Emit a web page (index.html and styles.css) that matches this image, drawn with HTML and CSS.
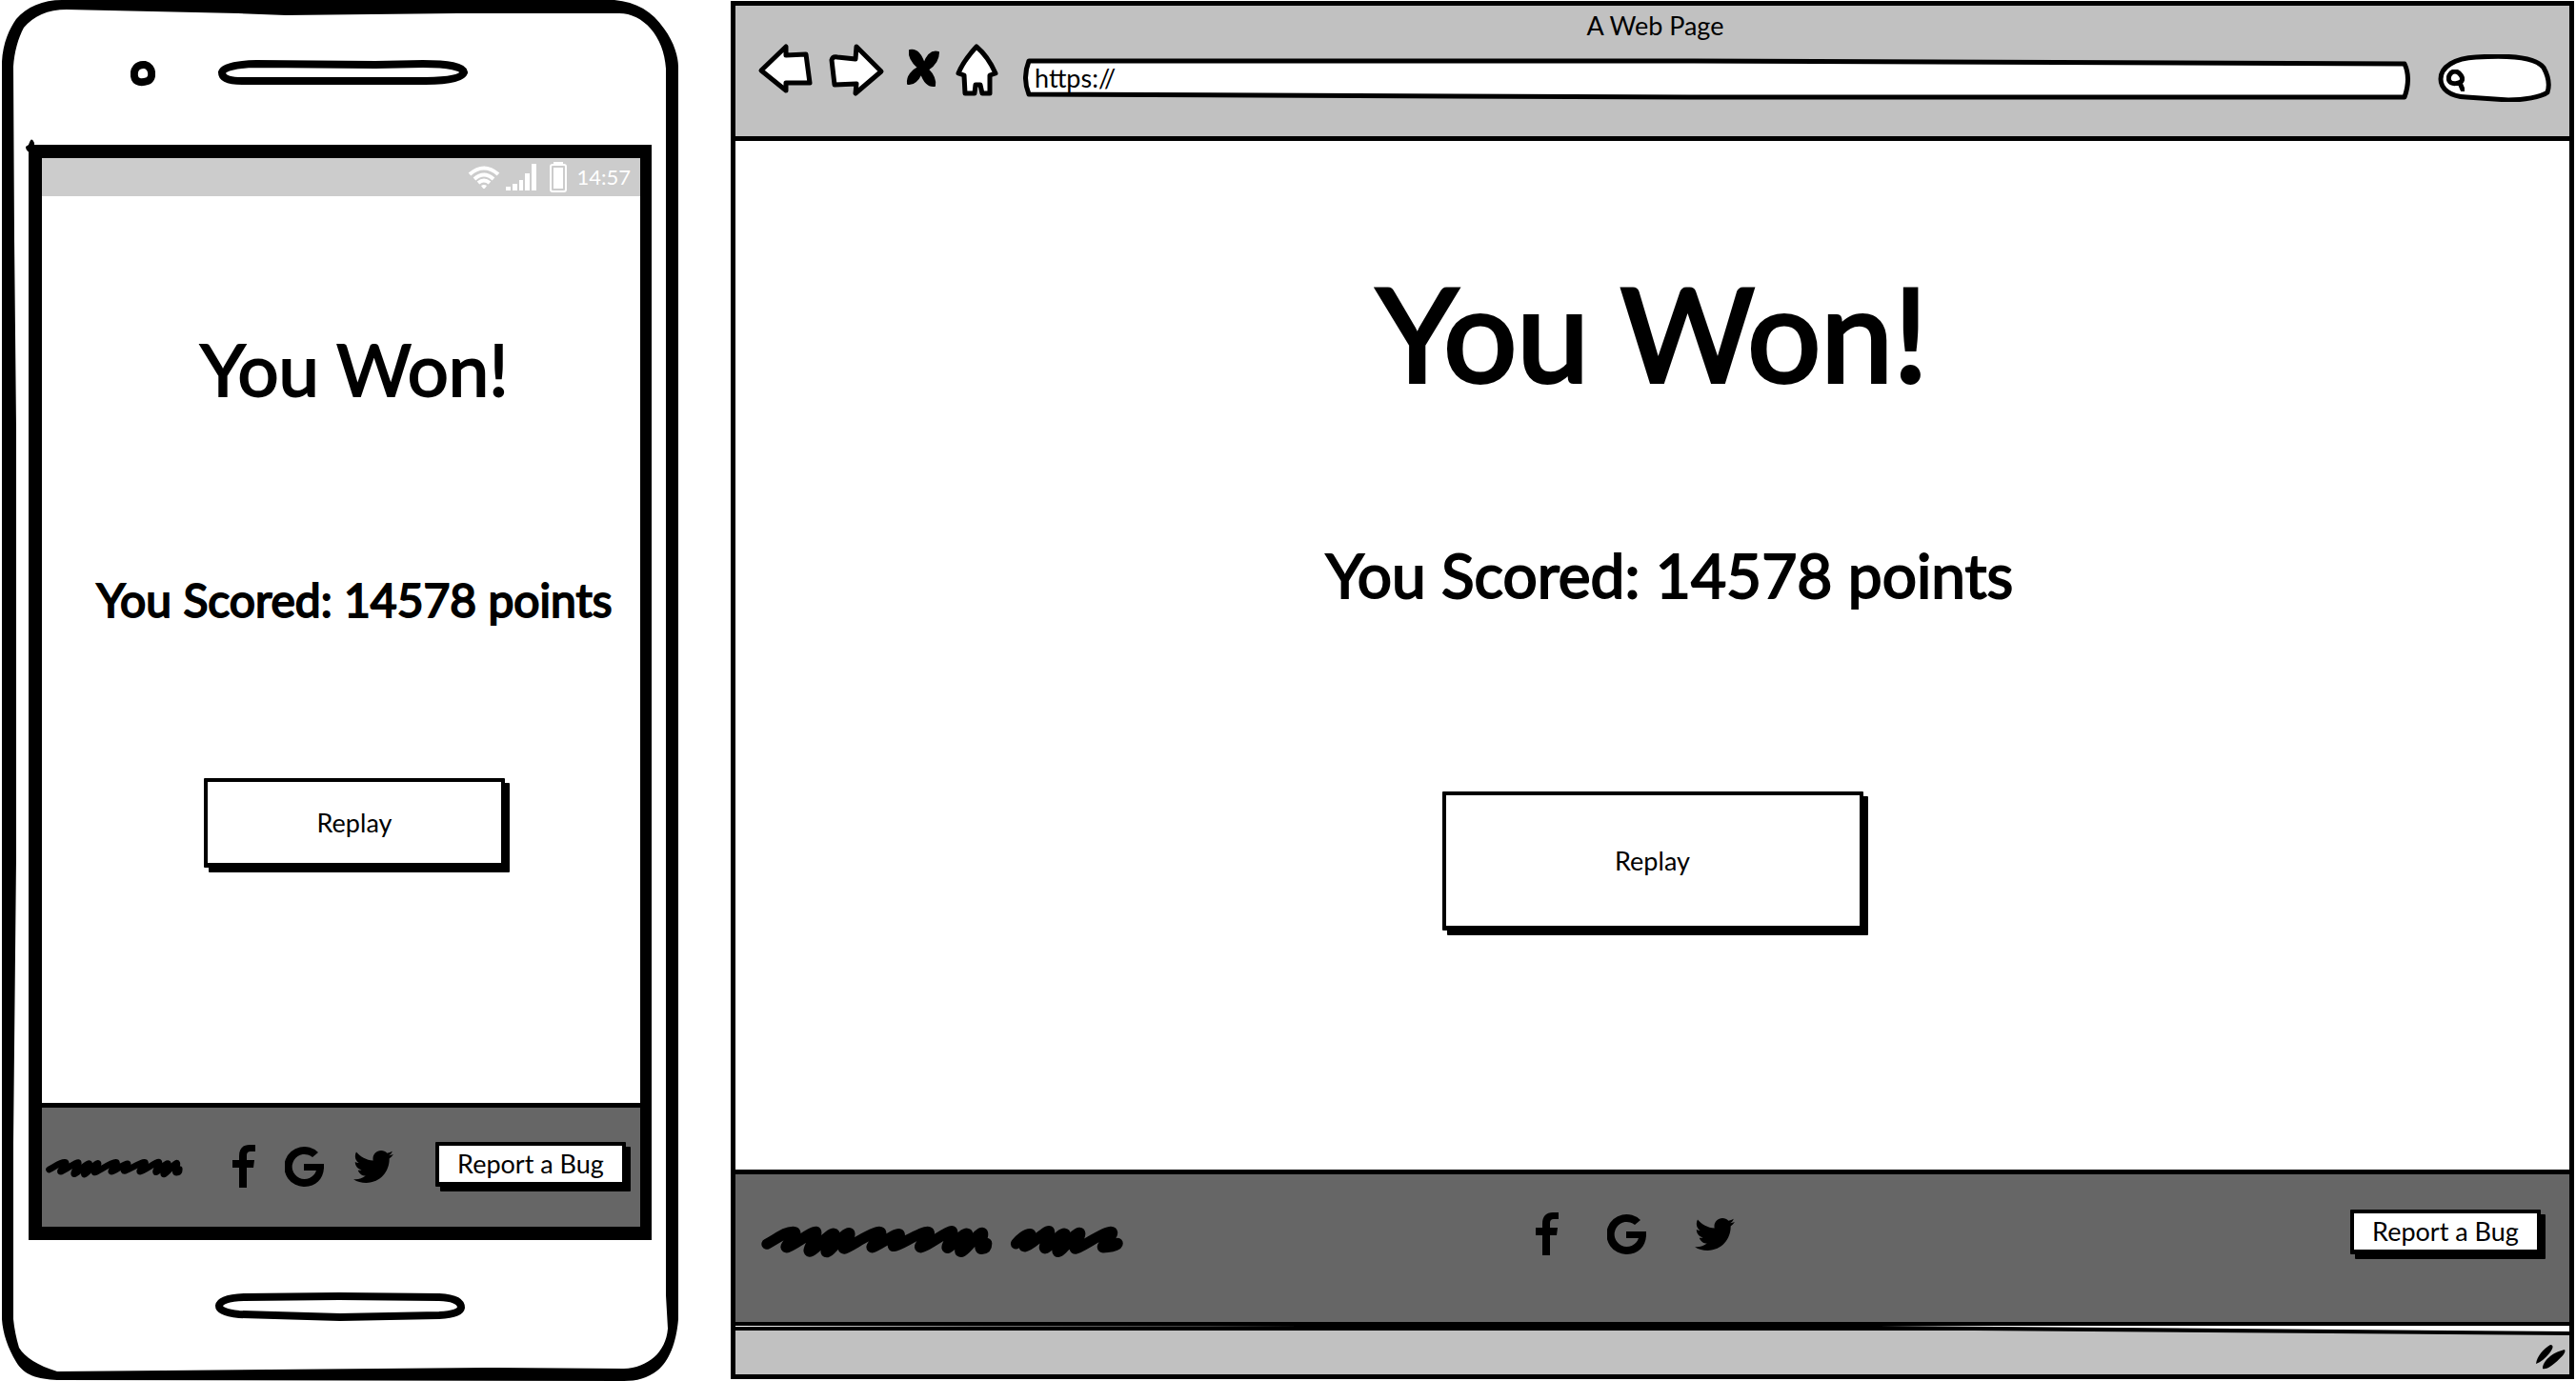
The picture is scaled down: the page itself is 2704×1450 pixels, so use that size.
FILE: index.html
```html
<!DOCTYPE html>
<html lang="en">
<head>
<meta charset="utf-8">
<meta name="viewport" content="width=device-width, initial-scale=1">
<title>You Won!</title>
<link rel="stylesheet" href="styles.css">
</head>
<body>
<svg class="symbols" aria-hidden="true">
  <symbol id="facebook" viewBox="0 0 24 45"><path d="M7 45V24H0v-8h7v-4C7 4 11 0 18 0h6v7h-5q-4 0-4 4v5h8l-1 8h-7v21z"/></symbol>
  <symbol id="google" viewBox="0 0 41 42"><path d="M35 6l-6 5A13 13 0 1 0 33 25H20v-7h21C42 32 34 42 21 42A21 21 0 1 1 35 6z"/></symbol>
  <symbol id="twitter" viewBox="0 48 512 416"><path d="M459.37 151.716c.325 4.548.325 9.097.325 13.645 0 138.72-105.583 298.558-298.558 298.558-59.452 0-114.68-17.219-161.137-47.106 8.447.974 16.568 1.299 25.34 1.299 49.055 0 94.213-16.568 130.274-44.832-46.132-.975-84.792-31.188-98.112-72.772 6.498.974 12.995 1.624 19.818 1.624 9.421 0 18.843-1.3 27.614-3.573-48.081-9.747-84.143-51.98-84.143-102.985v-1.299c13.969 7.797 30.214 12.67 47.431 13.319-28.264-18.843-46.781-51.005-46.781-87.391 0-19.492 5.197-37.36 14.294-52.954 51.655 63.675 129.3 105.258 216.365 109.807-1.624-7.797-2.599-15.918-2.599-24.04 0-57.828 46.782-104.934 104.934-104.934 30.213 0 57.502 12.67 76.67 33.137 23.715-4.548 46.456-13.32 66.599-25.34-7.798 24.366-24.366 44.833-46.132 57.827 21.117-2.273 41.584-8.122 60.426-16.243-14.292 20.791-32.161 39.308-52.628 54.253z"/></symbol>
  <symbol id="scribble-long" viewBox="114 226 736 106"><path class="ink" d="M132 287C165 270 190 247 216 248S180 298 195 298 275 245 287 248 255 310 268 311 330 252 345 254 310 313 322 313 380 250 393 252 365 303 378 302 465 247 489 248 455 298 467 298 540 252 552 255 520 295 537 294 620 247 643 248 605 298 621 298 705 245 719 246 695 302 707 300 755 252 768 254 735 313 749 312 805 250 816 251 800 304 815 303 831 294 831 285"/></symbol>
  <symbol id="scribble-short" viewBox="898 226 362 106"><path class="ink" d="M917 286C930 270 950 254 962 255S930 296 946 295 1010 245 1021 246 998 302 1010 301 1058 252 1071 254 1038 313 1051 312 1105 250 1118 251 1092 303 1107 302 1195 247 1218 248 1180 298 1194 298 1240 294 1240 285"/></symbol>
</svg>

<main class="board">
  <section class="phone" aria-label="Phone">
    <svg class="phone-outline" viewBox="0 0 712 1450" preserveAspectRatio="none" aria-hidden="true"><path fill-rule="evenodd" d="M2 65C3 45 10 30 17 20 28 7 45 0 65 0H645C668 2 685 12 697 30 708 45 712 60 712 70V1385C710 1410 702 1430 690 1439 680 1447 668 1450 655 1450L60 1449C40 1448 25 1444 17 1430 8 1415 3 1400 2 1385zM14 70C15 55 19 40 25 29 35 17 50 10 70 10L250 14 300 16 480 14H650C675 14 697 38 699 72V1360L701 1395C699 1420 680 1436 655 1437L520 1436 60 1440C40 1434 26 1425 20 1415 17 1405 15 1395 14 1385V1200L17 900V450L15 250z"/></svg>
    <div class="phone-top">
      <svg class="camera" viewBox="0 0 26 26" aria-hidden="true"><path d="M15 4C7 3 3 9 4 16S12 23 18 21 24 6 15 4z"/></svg>
      <svg class="speaker" viewBox="0 0 262 26" aria-hidden="true"><path d="M40 4L165 5 215 4Q256 4 258 13 255 22 218 22H25Q4 22 4 13 6 5 40 4z"/></svg>
    </div>
    <div class="screen">
      <svg class="corner-ink" viewBox="0 0 12 14" aria-hidden="true"><path d="M3 6Q6-4 9 4V14H4Q0 12 0 8z"/></svg>
      <div class="status">
        <svg class="wifi" viewBox="0 0 34 24" aria-hidden="true"><path d="M2 9Q17-4 32 9M7 14Q17 5 27 14M11 18Q17 13 23 18"/><path class="dot" d="M14 21Q17 19 20 21L17 25z"/></svg>
        <svg class="signal" viewBox="0 0 32 28" aria-hidden="true"><path d="M0 24h5v4H0zM7 21h5v7H7zM14 17h4v11h-4zM20 10h5v18h-5zM27 0h5v28h-5z"/></svg>
        <svg class="battery" viewBox="0 0 18 32" aria-hidden="true"><rect x="1" y="3" width="16" height="28" rx="2"/><path d="M4 0h10v3H4zM4 6h10v22H4z"/></svg>
        <span>14:57</span>
      </div>
      <div class="result result-phone">
        <h2 class="won">You Won!</h2>
        <p class="score">You Scored: 14578 points</p>
        <button class="btn replay" type="button">Replay</button>
      </div>
      <footer class="foot foot-phone">
        <svg class="scribble-mini" aria-hidden="true"><use href="#scribble-long"/></svg>
        <nav class="social" aria-label="Social">
          <a href="#facebook" aria-label="Facebook"><svg class="fb"><use href="#facebook"/></svg></a>
          <a href="#google" aria-label="Google"><svg class="goog"><use href="#google"/></svg></a>
          <a href="#twitter" aria-label="Twitter"><svg class="tw"><use href="#twitter"/></svg></a>
        </nav>
        <button class="btn report" type="button">Report a Bug</button>
      </footer>
    </div>
    <div class="phone-bottom">
      <svg class="home-bar" viewBox="0 0 262 30" aria-hidden="true"><path d="M30 5L130 4 235 5Q258 6 258 16 257 23 235 24L131 26 25 23Q4 21 4 14 5 6 30 5z"/></svg>
    </div>
  </section>

  <section class="browser" aria-label="Browser">
    <header class="chrome">
      <p class="page-name">A Web Page</p>
      <div class="toolbar">
        <div class="nav-buttons">
          <button class="tool" type="button" aria-label="Back"><svg class="arrow" viewBox="0 0 56 54"><path d="M2 28L28 3V12L49 11 53 41 28 41V49z"/></svg></button>
          <button class="tool" type="button" aria-label="Forward"><svg class="arrow" viewBox="0 0 56 54"><path d="M2 17Q3 13 8 14L27 16 28 3 54 29 27 52 28 42 5 43z"/></svg></button>
          <button class="tool stop" type="button" aria-label="Stop"><svg class="cross" viewBox="0 0 32 38"><path d="M2 1C11-1 15 9 17 15 20 7 25 1 32 3 32 12 27 17 21 21 26 26 29 32 28 38 20 39 16 31 14 25 11 31 7 37 0 36-1 28 5 22 11 19 5 14 1 8 2 1z"/></svg></button>
          <button class="tool" type="button" aria-label="Home"><svg class="home" viewBox="0 0 45 54"><path d="M22 3Q34 13 42 31L36 33V52H28L26 43H21L20 52H10L9 33 3 31Q8 18 22 3z"/></svg></button>
        </div>
        <div class="address">
          <svg class="field-shape" viewBox="0 0 1456 44" preserveAspectRatio="none" aria-hidden="true"><path d="M6 3L700 3 1450 6Q1457 21 1450 41L700 41 6 38Q-1 21 6 3z"/></svg>
          <input type="text" value="https://" aria-label="Address">
        </div>
        <div class="search">
          <svg class="field-shape" viewBox="0 0 119 50" preserveAspectRatio="none" aria-hidden="true"><path d="M3 26C3 13 18 4 40 3 70 1 102 2 111 14 117 25 117 34 115 40 108 45 90 48 74 48L30 45C12 44 3 36 3 26z"/></svg>
          <svg class="lens" viewBox="0 0 19 23" aria-hidden="true"><path d="M9 2C4 2 1 8 3 12S14 15 16 12 14 2 9 2zM14 14L17 21"/></svg>
          <input type="search" aria-label="Search">
        </div>
      </div>
    </header>
    <div class="result result-web">
      <h1 class="won">You Won!</h1>
      <p class="score">You Scored: 14578 points</p>
      <button class="btn replay" type="button">Replay</button>
    </div>
    <footer class="foot foot-web">
      <div class="scribbles">
        <svg class="long" aria-hidden="true"><use href="#scribble-long"/></svg>
        <svg class="short" aria-hidden="true"><use href="#scribble-short"/></svg>
      </div>
      <nav class="social" aria-label="Social">
        <a href="#facebook" aria-label="Facebook"><svg class="fb"><use href="#facebook"/></svg></a>
        <a href="#google" aria-label="Google"><svg class="goog"><use href="#google"/></svg></a>
        <a href="#twitter" aria-label="Twitter"><svg class="tw"><use href="#twitter"/></svg></a>
      </nav>
      <button class="btn report" type="button">Report a Bug</button>
    </footer>
    <div class="bottom-bar">
      <svg class="bar-edge" viewBox="0 0 1925 14" preserveAspectRatio="none" aria-hidden="true"><path class="gap" d="M0 0H1925V8L1400 2 0 2z"/><path d="M0 1L600 0H1200L1925 6V10L1300 5H0z"/></svg>
      <svg class="grip" viewBox="0 0 31 26" aria-hidden="true"><path d="M0 20C1 12 8 4 15 0 19 0 18 4 14 9 10 14 5 18 0 20zM7 25C7 17 17 8 30 5 32 8 27 13 20 19 15 23 11 26 7 25z"/></svg>
    </div>
  </section>
</main>
</body>
</html>
```
FILE: styles.css
```css
* { box-sizing: border-box; }
body { margin: 0; background: #fff; color: #000; font-family: Lato, "Open Sans", sans-serif; font-size: 27px; line-height: 32px; }
h1, h2, p { margin: 0; font-weight: 400; }
svg { display: block; flex: none; }
button, input { font: inherit; color: inherit; }
.symbols { position: absolute; width: 0; height: 0; }
.ink { fill: none; stroke: #000; stroke-width: 34; stroke-linecap: round; stroke-linejoin: round; }

.board { display: grid; grid-template-columns: 712fr 1935fr; gap: 55px; min-height: 100vh; padding-right: 2px; }

/* phone */
.phone { position: relative; display: flex; flex-direction: column; padding: 0 28px 0 30px; }
.phone-outline { position: absolute; inset: 0; width: 100%; height: 100%; pointer-events: none; }
.phone-top { display: flex; align-items: flex-start; gap: 66px; height: 152px; padding: 63px 0 0 107px; }
.camera, .speaker, .home-bar { fill: none; stroke: #000; stroke-width: 8; }
.camera { width: 26px; height: 28px; }
.speaker { width: 262px; height: 26px; }
.phone-bottom { display: flex; justify-content: center; height: 148px; padding-top: 55px; }
.home-bar { width: 262px; height: 30px; }
.screen { position: relative; flex: 1; display: flex; flex-direction: column; border: 14px solid #000; border-right-width: 12px; }
.corner-ink { position: absolute; top: -20px; left: -17px; width: 12px; height: 14px; }
.status { display: flex; align-items: center; justify-content: flex-end; height: 40px; padding-right: 10px; background: #ccc; color: #fff; fill: #fff; font-size: 22px; }
.wifi { width: 34px; height: 24px; margin-right: 6px; }
.wifi path { fill: none; stroke: #fff; stroke-width: 4; }
.wifi .dot { fill: #fff; stroke: none; }
.signal { width: 32px; height: 28px; margin-right: 14px; }
.battery { width: 18px; height: 32px; margin-right: 10px; }
.battery rect { fill: none; stroke: #fff; stroke-width: 2; }

/* result */
.result { flex: 1; display: flex; flex-direction: column; align-items: center; }
.result > * { flex: none; }
.won, .score { -webkit-text-stroke: 2px #000; white-space: nowrap; }
.result-web .won { -webkit-text-stroke-width: 4px; }
.result-phone { padding: 133px 0 80px 28px; }
.result-phone .won { font-size: 76px; line-height: 96px; }
.result-phone .score { margin-top: 165px; font-size: 48px; line-height: 60px; }
.result-phone .replay { margin-top: 157px; width: 316px; height: 94px; }
.result-web { padding: 121px 0 80px; }
.result-web .won { font-size: 136px; line-height: 160px; }
.result-web .score { margin-top: 135px; padding-left: 36px; font-size: 64px; line-height: 80px; }
.result-web .replay { margin-top: 187px; width: 442px; height: 146px; }
.btn { padding: 0; border: 4px solid #000; border-bottom-width: 5px; border-radius: 1px; background: #fff; box-shadow: 5px 5px 0 #000; white-space: nowrap; }
.report { width: 200px; height: 47px; }

/* footers */
.foot { background: #666; border-top: 5px solid #000; }
.social { display: flex; align-items: center; }
.social a { display: block; }
.fb { width: 24px; height: 45px; }
.goog { width: 41px; height: 42px; }
.tw { width: 42px; height: 34px; }
.foot-phone { display: flex; align-items: flex-start; height: 130px; padding: 36px 15px 0 4px; }
.foot-phone .social { gap: 31px; margin: 3px 0 0 52px; }
.foot-phone .report { margin-left: auto; }
.scribble-mini { width: 144px; height: 21px; margin-top: 17px; }
.foot-web { display: grid; grid-template-columns: 1fr auto 1fr; align-items: start; height: 164px; padding: 37px 30px 0 26px; border-bottom: 4px solid #000; }
.foot-web .social { gap: 51px; padding: 3px 32px 0 0; }
.foot-web .report { justify-self: end; }
.scribbles { display: flex; gap: 17px; padding-top: 16px; }
.long { width: 245px; height: 35px; }
.short { width: 120px; height: 35px; }

/* browser */
.browser { display: flex; flex-direction: column; margin: 1px 0 2px; border: 5px solid #000; }
.chrome { height: 142px; padding: 5px 19px 0 25px; background: #c1c1c1; border-bottom: 5px solid #000; }
.page-name { text-align: center; }
.toolbar { display: flex; align-items: flex-start; padding-top: 3px; }
.nav-buttons { display: flex; align-items: flex-start; gap: 18px; margin-right: 26px; }
.tool { display: block; padding: 0; border: 0; background: none; }
.tool svg { fill: #fff; stroke: #000; stroke-width: 5; stroke-linejoin: round; overflow: visible; }
.arrow { width: 56px; height: 54px; }
.tool .cross { width: 32px; height: 38px; fill: #000; stroke-width: 2; }
.stop { padding: 6px 0 0 8px; }
.home { width: 45px; height: 54px; }
.address, .search { position: relative; }
.address { flex: 1; height: 44px; margin: 15px 29px 0 0; }
.search { display: flex; width: 119px; height: 50px; margin-top: 11px; padding: 16px 6px 0 9px; }
.field-shape { position: absolute; inset: 0; width: 100%; height: 100%; fill: #fff; stroke: #000; stroke-width: 5; stroke-linejoin: round; }
.address input, .search input { position: relative; width: 100%; min-width: 0; padding: 0; border: 0; background: none; outline: 0; }
.address input { height: 40px; padding: 0 12px; }
.search input { height: 20px; appearance: none; }
.lens { position: relative; width: 19px; height: 23px; fill: none; stroke: #000; stroke-width: 5; stroke-linecap: round; }
.bottom-bar { position: relative; display: flex; justify-content: flex-end; height: 51px; padding: 20px 4px 0 0; background: #c1c1c1; }
.bar-edge { position: absolute; top: 0; left: 0; width: 100%; height: 14px; }
.bar-edge .gap { fill: #fff; }
.grip { width: 31px; height: 26px; }
```
